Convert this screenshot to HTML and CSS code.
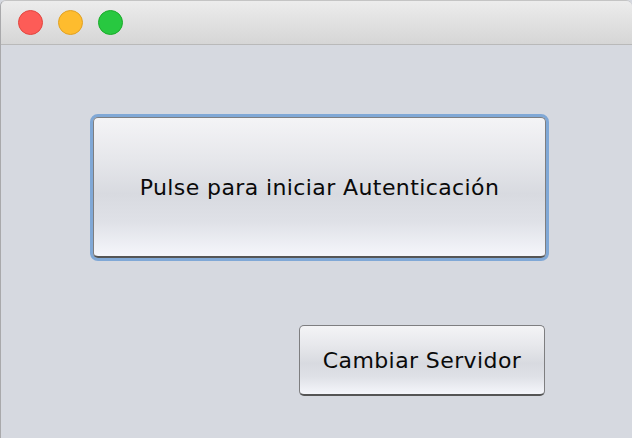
FILE: index.html
```html
<!DOCTYPE html>
<html>
<head>
<meta charset="utf-8">
<link rel="stylesheet" href="styles.css">
</head>
<body>
<div class="window">
  <div class="titlebar">
    <span class="light red"></span>
    <span class="light yellow"></span>
    <span class="light green"></span>
  </div>
  <div class="content">
    <div class="focus-ring">
      <button class="btn big">Pulse para iniciar Autenticación</button>
    </div>
    <div class="row">
      <button class="btn small">Cambiar Servidor</button>
    </div>
  </div>
</div>
</body>
</html>
```

FILE: styles.css
```css
html, body {
  margin: 0;
  padding: 0;
  width: 632px;
  height: 438px;
  overflow: hidden;
  background: #d6d9e0;
}
.window {
  width: 632px;
  height: 438px;
  box-sizing: border-box;
  border-left: 1px solid #a9a9ab;
  border-top: 1px solid #c4c4c4;
  border-radius: 6px 6px 0 0;
  background: #d6d9e0;
  overflow: hidden;
  display: flex;
  flex-direction: column;
}
.titlebar {
  height: 44px;
  flex: none;
  box-sizing: border-box;
  border-bottom: 1px solid #b9b9b9;
  background: linear-gradient(#ececec, #d6d6d6);
  display: flex;
  align-items: center;
  padding-left: 17px;
  gap: 15px;
}
.light {
  width: 25px;
  height: 25px;
  border-radius: 50%;
  box-sizing: border-box;
}
.red { background: #fd5c57; border: 1px solid #e2463f; }
.yellow { background: #febc2e; border: 1px solid #e1a123; }
.green { background: #28c840; border: 1px solid #1aab29; }
.content {
  flex: 1;
  display: flex;
  flex-direction: column;
  padding: 69px 0 0 89px;
}
.focus-ring {
  width: 459px;
  height: 147px;
  box-sizing: border-box;
  border: 3px solid #80a8d6;
  border-radius: 8px;
  display: flex;
}
.btn {
  font-family: "DejaVu Sans", sans-serif;
  color: #0a0a0a;
  border: 1px solid #7e7e80;
  border-bottom-color: #555;
  border-radius: 5px;
  background: linear-gradient(#f4f4f6 0%, #e6e7eb 30%, #d8dae0 55%, #dfe1e7 75%, #f5f6fb 100%);
  padding: 0;
  margin: 0;
}
.big {
  flex: 1;
  font-size: 22px;
  border-bottom-width: 2px;
  letter-spacing: 0.4px;
}
.row {
  display: flex;
  padding: 64px 0 0 209px;
}
.small {
  width: 246px;
  height: 71px;
  font-size: 22px;
  letter-spacing: 0.4px;
  border-bottom-width: 2px;
}
```
